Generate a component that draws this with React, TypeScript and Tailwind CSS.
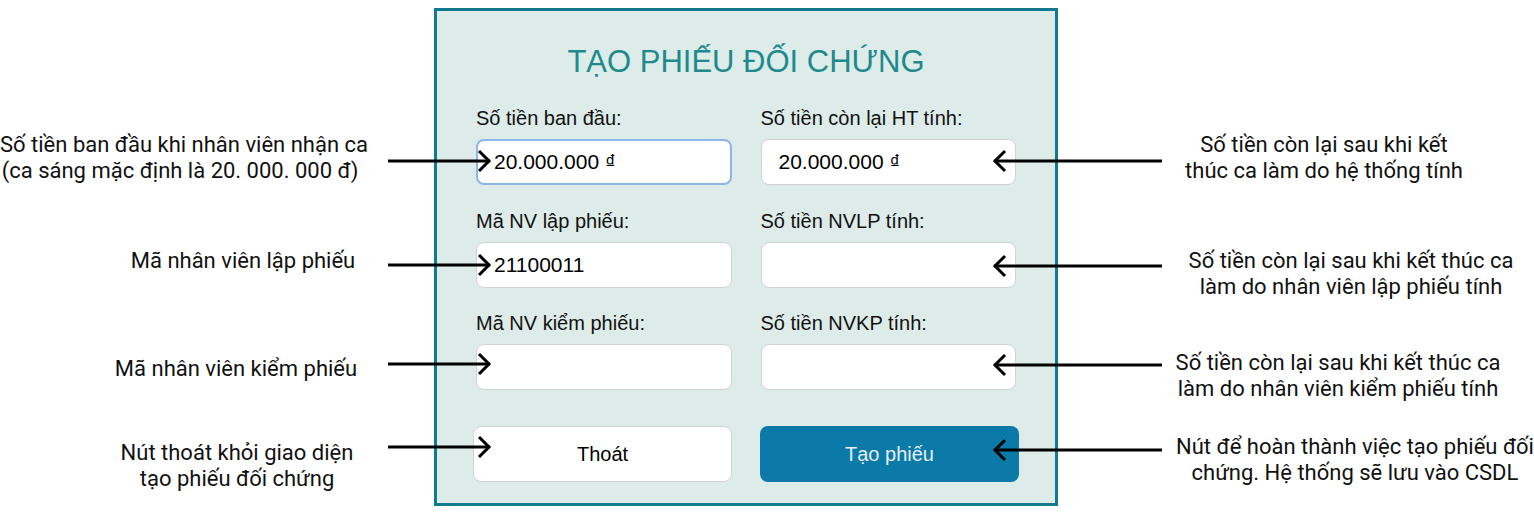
import React from 'react';

const panelFont = { fontFamily: '"Liberation Sans", Arial, sans-serif' };
const noteFont = { fontFamily: 'Roboto, "Noto Sans", sans-serif' };

function ArrowRight() {
  return (
    <svg width="104" height="24" viewBox="0 0 104 24" className="block">
      <line x1="0" y1="12" x2="102" y2="12" stroke="#000" strokeWidth="3" />
      <polyline points="91,2 101,12 91,22" fill="none" stroke="#000" strokeWidth="3" />
    </svg>
  );
}

function ArrowLeft() {
  return (
    <svg width="170" height="24" viewBox="0 0 170 24" className="block">
      <line x1="2" y1="12" x2="170" y2="12" stroke="#000" strokeWidth="3" />
      <polyline points="13,2 3,12 13,22" fill="none" stroke="#000" strokeWidth="3" />
    </svg>
  );
}

interface INoteProps {
  lines: string[];
  rowClass: string;
  boxClass: string;
  arrowClass: string;
  side: 'left' | 'right';
}

function Note(props: INoteProps) {
  const { lines, rowClass, boxClass, arrowClass, side } = props;
  return (
    <div className={`relative flex items-center ${rowClass}`}>
      <div className={`text-center text-[22px] leading-[26px] text-[#111] whitespace-nowrap ${boxClass}`} style={noteFont}>
        {lines.map((line, i) => (
          <div key={i}>{line}</div>
        ))}
      </div>
      <div className={`absolute z-10 ${arrowClass}`}>{side === 'left' ? <ArrowRight /> : <ArrowLeft />}</div>
    </div>
  );
}

function Field({ label, value, focused }: { label: string; value?: React.ReactNode; focused?: boolean }) {
  return (
    <div className="flex flex-col">
      <div className="h-[24px] text-[20px] leading-[24px] text-[#111]">{label}</div>
      <div
        className={
          focused
            ? 'mt-[9px] h-[46px] rounded-[8px] border-2 border-[#8db6e6] bg-white pl-[16px] flex items-center text-[21px] text-black'
            : 'mt-[9px] h-[46px] rounded-[8px] border border-[#d2d2d2] bg-white pl-[17px] flex items-center text-[21px] text-black'
        }
      >
        {value}
      </div>
    </div>
  );
}

function Money() {
  return (
    <span className="flex items-baseline">
      20.000.000
      <span className="ml-[6px] text-[21px]">₫</span>
    </span>
  );
}

export default function App() {
  return (
    <div className="w-[1534px] h-[512px] bg-white overflow-hidden flex">
      {/* chú thích bên trái */}
      <div className="w-[434px] shrink-0 flex flex-col pt-[118px]">
        <Note
          side="left"
          lines={['Số tiền ban đầu khi nhân viên nhận ca', '(ca sáng mặc định là 20. 000. 000 đ)']}
          rowClass="h-[78px]"
          boxClass="w-[360px] ml-0 pt-[4px]"
          arrowClass="left-[388px] top-[31px]"
        />
        <Note
          side="left"
          lines={['Mã nhân viên lập phiếu']}
          rowClass="h-[130px]"
          boxClass="w-[360px] ml-[63px] pt-[6px]"
          arrowClass="left-[388px] top-[59px]"
        />
        <Note
          side="left"
          lines={['Mã nhân viên kiểm phiếu']}
          rowClass="h-[84px]"
          boxClass="w-[360px] ml-[56px] pt-[12px]"
          arrowClass="left-[388px] top-[30px]"
        />
        <Note
          side="left"
          lines={['Nút thoát khỏi giao diện', 'tạo phiếu đối chứng']}
          rowClass="h-[110px]"
          boxClass="w-[360px] ml-[57px] pt-[16px]"
          arrowClass="left-[388px] top-[31px]"
        />
      </div>

      {/* form */}
      <div className="pt-[8px] shrink-0">
        <div className="w-[624px] h-[498px] border-[3px] border-[#127a8e] bg-[#ddece8] flex flex-col" style={panelFont}>
          <div className="mt-[33px] h-[36px] text-center text-[31px] leading-[36px] text-[#1f8a8d]">
            TẠO PHIẾU ĐỐI CHỨNG
          </div>
          <div className="mt-[26px] px-[39px] grid grid-cols-2 gap-x-[29px]">
            <Field label="Số tiền ban đầu:" value={<Money />} focused />
            <Field label="Số tiền còn lại HT tính:" value={<Money />} />
          </div>
          <div className="mt-[24px] px-[39px] grid grid-cols-2 gap-x-[29px]">
            <Field label="Mã NV lập phiếu:" value="21100011" />
            <Field label="Số tiền NVLP tính:" />
          </div>
          <div className="mt-[23px] px-[39px] grid grid-cols-2 gap-x-[29px]">
            <Field label="Mã NV kiểm phiếu:" />
            <Field label="Số tiền NVKP tính:" />
          </div>
          <div className="mt-[36px] px-[36px] grid grid-cols-2 gap-x-[28px]">
            <button className="h-[56px] rounded-[8px] border border-[#d2d2d2] bg-white text-[20px] text-black">
              Thoát
            </button>
            <button className="h-[56px] rounded-[8px] bg-[#0b7aa8] text-[20px] text-[#e4eef3]">Tạo phiếu</button>
          </div>
        </div>
      </div>

      {/* chú thích bên phải */}
      <div className="flex-1 flex flex-col pt-[118px]">
        <Note
          side="right"
          lines={['Số tiền còn lại sau khi kết', 'thúc ca làm do hệ thống tính']}
          rowClass="h-[80px]"
          boxClass="w-[400px] ml-[66px]"
          arrowClass="-left-[66px] top-[31px]"
        />
        <Note
          side="right"
          lines={['Số tiền còn lại sau khi kết thúc ca', 'làm do nhân viên lập phiếu tính']}
          rowClass="h-[150px]"
          boxClass="w-[400px] ml-[93px] pt-[6px]"
          arrowClass="-left-[66px] top-[57px]"
        />
        <Note
          side="right"
          lines={['Số tiền còn lại sau khi kết thúc ca', 'làm do nhân viên kiểm phiếu tính']}
          rowClass="h-[54px]"
          boxClass="w-[400px] ml-[80px] pt-[8px]"
          arrowClass="-left-[66px] top-[8px]"
        />
        <Note
          side="right"
          lines={['Nút để hoàn thành việc tạo phiếu đối', 'chứng. Hệ thống sẽ lưu vào CSDL']}
          rowClass="h-[114px]"
          boxClass="w-[400px] ml-[97px] pt-[8px]"
          arrowClass="-left-[66px] top-[39px]"
        />
      </div>
    </div>
  );
}
